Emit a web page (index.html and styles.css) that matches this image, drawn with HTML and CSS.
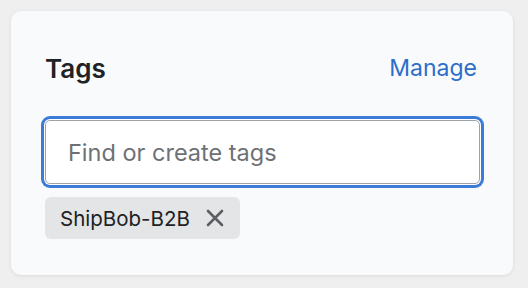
FILE: index.html
```html
<!DOCTYPE html>
<html lang="en">

<head>
    <meta charset="UTF-8" />
    <title>Tags</title>
    <link rel="stylesheet" href="styles.css">
</head>

<body>
    <div class="card">
        <div class="card-header">
            <h2>Tags</h2>
            <a href="#" class="manage-link">Manage</a>
        </div>

        <input type="text" class="tag-input" placeholder="Find or create tags" />

        <div class="tag-list">
            <span class="tag">
                ShipBob-B2B
                <button class="tag-remove" aria-label="Remove ShipBob-B2B">
                    <svg width="18" height="18" viewBox="0 0 18 18">
                        <path d="M2 2 L16 16 M16 2 L2 16" stroke="currentColor" stroke-width="2.6" stroke-linecap="round" />
                    </svg>
                </button>
            </span>
        </div>
    </div>
</body>

</html>
```

FILE: styles.css
```css
* {
    box-sizing: border-box;
    margin: 0;
    padding: 0;
}

body {
    font-family: 'Inter', 'Noto Sans', sans-serif;
    background-color: #efefef;
    padding: 11px;
    color: #202223;
}

.card {
    width: 502px;
    height: 264px;
    background-color: #f9fafb;
    border-radius: 10px;
    box-shadow: 0 1px 4px rgba(0, 0, 0, 0.08);
    padding: 40px 33px 0 34px;
}

.card-header {
    display: flex;
    justify-content: space-between;
    align-items: center;
    height: 34px;
}

h2 {
    font-size: 26px;
    font-weight: 600;
    color: #202223;
}

.manage-link {
    margin-right: 3px;
    font-size: 23px;
    color: #2c6ecb;
    text-decoration: none;
}

.tag-input {
    display: block;
    width: 100%;
    height: 64px;
    margin-top: 35px;
    padding: 0 22px;
    font-family: inherit;
    font-size: 23.5px;
    color: #202223;
    background-color: #ffffff;
    border: 1px solid #9fa3a8;
    border-radius: 5px;
    box-shadow: 0 0 0 1px #ffffff, 0 0 0 4px #3c7bd8;
    outline: none;
}

.tag-input::placeholder {
    color: #6d7175;
}

.tag-list {
    display: flex;
    margin-top: 13px;
}

.tag {
    display: flex;
    align-items: center;
    gap: 16px;
    height: 42px;
    padding: 0 16px 0 15px;
    background-color: #e4e5e7;
    border-radius: 6px;
    font-size: 20.5px;
    color: #202223;
}

.tag-remove {
    display: flex;
    border: none;
    background: none;
    color: #5c5f62;
    cursor: pointer;
}
```
